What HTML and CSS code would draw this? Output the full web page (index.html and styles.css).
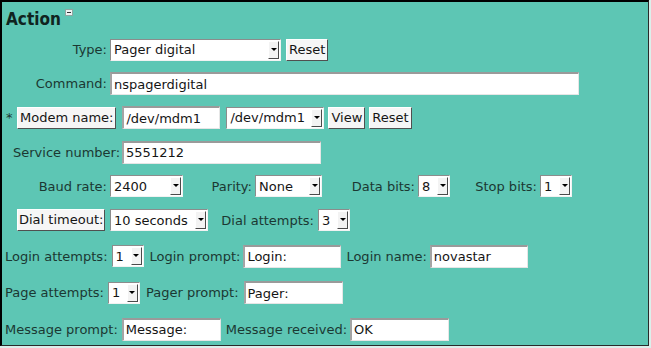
FILE: index.html
```html
<!DOCTYPE html>
<html>
<head>
<meta charset="utf-8">
<link rel="stylesheet" href="styles.css">
</head>
<body>
<div class="panel">
  <div class="title"><span class="title-text">Action</span><span class="collapse"><span class="dash"></span></span></div>

  <div class="group group-a">
    <div class="row">
      <span class="lab w105">Type:</span>
      <span class="sel ml3 w171"><span class="val">Pager digital</span><span class="arrow"><span class="tri"></span></span></span>
      <button class="btn ml5">Reset</button>
    </div>
    <div class="row">
      <span class="lab w105">Command:</span>
      <input class="inp ml3 w469" value="nspagerdigital">
    </div>
    <div class="row">
      <span class="star">*</span>
      <button class="btn">Modem name:</button>
      <input class="inp ml6 w98" value="/dev/mdm1">
      <span class="sel ml6 w98"><span class="val">/dev/mdm1</span><span class="arrow"><span class="tri"></span></span></span>
      <button class="btn ml4">View</button>
      <button class="btn ml4">Reset</button>
    </div>
    <div class="row">
      <span class="lab-left ml11">Service number:</span>
      <input class="inp ml2 w199" value="5551212">
    </div>
    <div class="row">
      <span class="lab w105">Baud rate:</span>
      <span class="sel ml3 w73"><span class="val">2400</span><span class="arrow"><span class="tri"></span></span></span>
      <span class="lab w69">Parity:</span>
      <span class="sel ml3 w67"><span class="val">None</span><span class="arrow"><span class="tri"></span></span></span>
      <span class="lab w93">Data bits:</span>
      <span class="sel ml3 w32"><span class="val">8</span><span class="arrow"><span class="tri"></span></span></span>
      <span class="lab w87">Stop bits:</span>
      <span class="sel ml3 w32"><span class="val">1</span><span class="arrow"><span class="tri"></span></span></span>
    </div>
    <div class="row">
      <span class="btn-cell w105"><button class="btn btn-tight">Dial timeout:</button></span>
      <span class="sel ml3 w98"><span class="val">10 seconds</span><span class="arrow"><span class="tri"></span></span></span>
      <span class="lab w106">Dial attempts:</span>
      <span class="sel ml4 w32"><span class="val">3</span><span class="arrow"><span class="tri"></span></span></span>
    </div>
  </div>

  <div class="group group-b">
    <div class="row">
      <span class="lab-left ml3">Login attempts:</span>
      <span class="sel ml4 w32"><span class="val">1</span><span class="arrow"><span class="tri"></span></span></span>
      <span class="lab-left ml6">Login prompt:</span>
      <input class="inp ml3 w98" value="Login:">
      <span class="lab-left ml5">Login name:</span>
      <input class="inp ml3 w98" value="novastar">
    </div>
    <div class="row">
      <span class="lab-left ml3">Page attempts:</span>
      <span class="sel ml4 w32"><span class="val">1</span><span class="arrow"><span class="tri"></span></span></span>
      <span class="lab-left ml6">Pager prompt:</span>
      <input class="inp ml5 w99" value="Pager:">
    </div>
    <div class="row">
      <span class="lab-left ml3">Message prompt:</span>
      <input class="inp ml4 w99" value="Message:">
      <span class="lab-left ml5">Message received:</span>
      <input class="inp ml3 w99" value="OK">
    </div>
  </div>
</div>
</body>
</html>
```
FILE: styles.css
```css
html, body {
  margin: 0;
  padding: 0;
}
body {
  background: #dcefeb;
  font-family: "DejaVu Sans", "Liberation Sans", sans-serif;
  font-size: 13px;
  color: #1b3832;
}
.panel {
  box-sizing: border-box;
  width: 649px;
  height: 346px;
  background: #5dc6b4;
  border-top: 2px solid #000;
  border-left: 2px solid #000;
  border-right: 1px solid #2a2a2a;
  border-bottom: 1px solid #2a2a2a;
  overflow: hidden;
}
.title {
  display: flex;
  align-items: flex-start;
  padding: 7px 0 0 4px;
  height: 20px;
}
.title-text {
  font-family: "DejaVu Sans Condensed", "DejaVu Sans", sans-serif;
  font-weight: bold;
  font-size: 17px;
  line-height: 20px;
  color: #10241f;
}
.collapse {
  box-sizing: border-box;
  width: 8px;
  height: 7px;
  margin: 0 0 0 4px;
  border: 1px solid #8fa6a2;
  background: #eef3f2;
  display: flex;
  align-items: center;
  justify-content: center;
}
.dash {
  width: 4px;
  height: 1px;
  background: #333;
}
.group {
  display: flex;
  flex-direction: column;
}
.group-a {
  margin-top: 9px;
  gap: 11.2px;
}
.group-b {
  margin-top: 13px;
  gap: 13.5px;
}
.row {
  display: flex;
  align-items: center;
  height: 23px;
  white-space: nowrap;
}
.lab {
  flex: none;
  text-align: right;
}
.lab-left {
  flex: none;
}
.btn-cell {
  flex: none;
  box-sizing: border-box;
  padding-left: 15px;
  display: flex;
}
.star {
  flex: none;
  box-sizing: border-box;
  width: 15px;
  padding-left: 4px;
}
.sel {
  flex: none;
  box-sizing: border-box;
  height: 22px;
  display: inline-flex;
  align-items: center;
  justify-content: space-between;
  background: #fff;
  border-top: 1px solid #8c8c8c;
  border-left: 1px solid #8c8c8c;
  border-bottom: 1px solid #f2f2f2;
  border-right: 1px solid #f2f2f2;
  padding-left: 3px;
  color: #151515;
}
.val {
  overflow: hidden;
}
.arrow {
  flex: none;
  box-sizing: border-box;
  width: 11px;
  height: 18px;
  margin-right: 1px;
  background: #f3f3f3;
  border-top: 1px solid #fff;
  border-left: 1px solid #fff;
  border-right: 1px solid #4a4a4a;
  border-bottom: 1px solid #4a4a4a;
  display: flex;
  align-items: center;
  justify-content: center;
}
.tri {
  width: 0;
  height: 0;
  border-left: 3px solid transparent;
  border-right: 3px solid transparent;
  border-top: 3px solid #000;
  margin-bottom: 1px;
}
.inp {
  flex: none;
  box-sizing: border-box;
  height: 23px;
  margin-top: 0;
  margin-bottom: 0;
  background: #fff;
  border-top: 2px solid #9a9a9a;
  border-left: 2px solid #a4a4a4;
  border-bottom: 1px solid #e6e6e6;
  border-right: 1px solid #e6e6e6;
  padding: 0 2px;
  font-family: "DejaVu Sans", "Liberation Sans", sans-serif;
  font-size: 13px;
  color: #151515;
  outline: none;
}
.btn {
  flex: none;
  box-sizing: border-box;
  height: 22px;
  margin-top: 0;
  margin-bottom: 0;
  background: #f6f6f6;
  border: 1px solid;
  border-color: #ffffff #505050 #505050 #ffffff;
  border-radius: 0;
  padding: 0 2px;
  font-family: "DejaVu Sans", "Liberation Sans", sans-serif;
  font-size: 13px;
  color: #151515;
  line-height: 18px;
}
.btn-tight {
  padding: 0 1px;
}
.ml2 { margin-left: 2px; }
.ml3 { margin-left: 3px; }
.ml4 { margin-left: 4px; }
.ml5 { margin-left: 5px; }
.ml6 { margin-left: 6px; }
.ml11 { margin-left: 11px; }
.w32 { width: 32px; }
.w67 { width: 67px; }
.w69 { width: 69px; }
.w73 { width: 73px; }
.w87 { width: 87px; }
.w93 { width: 93px; }
.w98 { width: 98px; }
.w99 { width: 99px; }
.w105 { width: 105px; }
.w106 { width: 106px; }
.w171 { width: 171px; }
.w199 { width: 199px; }
.w469 { width: 469px; }
```
